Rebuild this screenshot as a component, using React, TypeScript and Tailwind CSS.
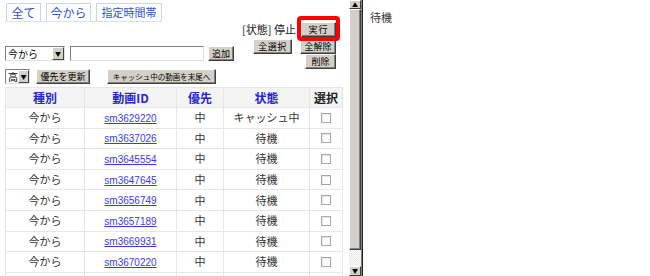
import React from 'react';

const jp = '[font-family:"Noto_Sans_CJK_JP","Liberation_Sans",sans-serif]';

const rows = [
  { id: 'sm3629220', state: 'キャッシュ中' },
  { id: 'sm3637026', state: '待機' },
  { id: 'sm3645554', state: '待機' },
  { id: 'sm3647645', state: '待機' },
  { id: 'sm3656749', state: '待機' },
  { id: 'sm3657189', state: '待機' },
  { id: 'sm3669931', state: '待機' },
  { id: 'sm3670220', state: '待機' },
  { id: 'sm3681881', state: '中断' },
];

const Btn: React.FC<{ children: React.ReactNode; className?: string }> = ({ children, className = '' }) => (
  <button
    className={`h-[15px] p-0 flex items-center justify-center bg-[#d4d0c8] border border-t-white border-l-white border-r-[#404040] border-b-[#404040] shadow-[inset_-1px_-1px_#808080] leading-none text-black whitespace-nowrap overflow-hidden ${className}`}
  >
    {children}
  </button>
);

const Select: React.FC<{ label: string; className?: string }> = ({ label, className = '' }) => (
  <div className={`h-[15px] flex items-stretch bg-white border border-t-[#808080] border-l-[#808080] border-r-[#e0e0e0] border-b-[#e0e0e0] ${className}`}>
    <span className="flex-1 text-[10px] leading-[13px] pl-[2px] text-black">{label}</span>
    <span className="w-[12px] bg-[#d4d0c8] border border-t-white border-l-white border-r-[#404040] border-b-[#404040] flex items-center justify-center text-[6px] leading-none text-black">▼</span>
  </div>
);

const td = 'border border-[#e6e6e6] text-center text-[11px] leading-none text-[#333] p-0';
const th = 'border border-[#e6e6e6] text-center text-[12px] leading-none font-bold p-0';

export default function App() {
  return (
    <div className={`w-[650px] h-[276px] flex overflow-hidden bg-white whitespace-nowrap ${jp}`}>
      {/* left frame */}
      <div className="w-[349px] h-[276px] overflow-hidden">
        {/* tabs */}
        <div className="pt-[3px] pl-[5px]">
          <div className="flex w-[157px] border-b border-[#d6e2f2]">
            <div className="w-[35px] h-[18px] ml-[1px] border border-b-0 border-[#c9d6e6] text-[12px] leading-[17px] text-center text-[#2f52e0]">全て</div>
            <div className="w-[45px] h-[18px] ml-[5px] border border-b-0 border-[#c9d6e6] text-[12px] leading-[17px] text-center text-[#2f52e0]">今から</div>
            <div className="w-[66px] h-[18px] ml-[5px] border border-b-0 border-[#c9d6e6] text-[11px] leading-[17px] text-center text-[#2f52e0]">指定時間帯</div>
          </div>
        </div>

        {/* status */}
        <div className="flex justify-end items-end pr-[9px] -mt-[6px]">
          <span className="text-[11px] leading-none text-[#222] mb-[6px] mr-[1px]">[状態] 停止</span>
          <div className="relative z-10 w-[43px] h-[25px] border-4 border-[#ff0000] rounded-[4px] flex justify-center pt-[2px]">
            <Btn className="w-[35px] text-[9px] tracking-[1px]">実行</Btn>
          </div>
        </div>

        {/* add row + select buttons */}
        <div className="flex -mt-[2px] pl-[5px] pr-[13px]">
          <div className="flex items-center pt-[7px] self-start">
            <Select label="今から" className="w-[60px]" />
            <div className="w-[134px] h-[15px] ml-[5px] bg-white border border-t-[#808080] border-l-[#808080] border-r-[#e0e0e0] border-b-[#e0e0e0]" />
            <Btn className="w-[26px] ml-[4px] text-[9px]">追加</Btn>
          </div>
          <div className="ml-auto flex items-start">
            <Btn className="w-[39px] text-[9px] tracking-[0.5px]">全選択</Btn>
            <div className="flex flex-col items-end ml-[8px]">
              <Btn className="w-[36px] text-[9px]">全解除</Btn>
              <Btn className="w-[31px] text-[9px]">削除</Btn>
            </div>
          </div>
        </div>

        {/* priority row */}
        <div className="flex items-center pl-[5px]">
          <Select label="高" className="w-[25px]" />
          <Btn className="w-[54px] ml-[6px] text-[9px]">優先を更新</Btn>
          <Btn className="w-[109px] ml-[17px] text-[7.5px]">キャッシュ中の動画を末尾へ</Btn>
        </div>

        {/* table */}
        <table className="ml-[5px] mt-[3px] w-[337px] border-collapse table-fixed">
          <colgroup>
            <col className="w-[79px]" />
            <col className="w-[92px]" />
            <col className="w-[47px]" />
            <col className="w-[86px]" />
            <col className="w-[33px]" />
          </colgroup>
          <thead>
            <tr className="h-[20px] bg-[#f4f4f4]">
              <th className={`${th} text-[#2424d8]`}>種別</th>
              <th className={`${th} text-[#2424d8]`}>動画ID</th>
              <th className={`${th} text-[#2424d8]`}>優先</th>
              <th className={`${th} text-[#2424d8]`}>状態</th>
              <th className={`${th} text-[#222]`}>選択</th>
            </tr>
          </thead>
          <tbody>
            {rows.map((r) => (
              <tr key={r.id} className="h-[20.6px]">
                <td className={td}>今から</td>
                <td className={td}>
                  <a className="text-[10px] leading-none text-[#3a3aff] underline [font-family:'Liberation_Sans',sans-serif]">{r.id}</a>
                </td>
                <td className={td}>中</td>
                <td className={td}>{r.state}</td>
                <td className={td}>
                  <div className="flex justify-center">
                    <span className="w-[10px] h-[10px] bg-white border border-[#a8a8a8] shadow-[inset_1px_1px_#e8e8e8]" />
                  </div>
                </td>
              </tr>
            ))}
          </tbody>
        </table>
      </div>

      {/* scrollbar */}
      <div className="w-[12px] h-[276px] flex flex-col bg-[repeating-conic-gradient(#e8e6e0_0%_25%,#ffffff_0%_50%)] bg-[length:2px_2px]">
        <div className="h-[9px] bg-[#d4d0c8] border border-t-white border-l-white border-r-[#404040] border-b-[#404040] flex items-center justify-center text-[6px] leading-none text-black">▲</div>
        <div className="h-[241px] bg-[#d4d0c8] border border-t-white border-l-white border-r-[#404040] border-b-[#404040] shadow-[inset_-1px_-1px_#808080]" />
        <div className="flex-1" />
        <div className="h-[10px] bg-[#d4d0c8] border border-t-white border-l-white border-r-[#404040] border-b-[#404040] flex items-center justify-center text-[6px] leading-none text-black">▼</div>
      </div>

      {/* frame border */}
      <div className="w-[1px] h-[276px] bg-[#808080]" />
      <div className="w-[1px] h-[276px] bg-[#202020]" />

      {/* right frame */}
      <div className="flex-1 pl-[7px] pt-[3px]">
        <span className="text-[11px] leading-none text-[#333]">待機</span>
      </div>
    </div>
  );
}
